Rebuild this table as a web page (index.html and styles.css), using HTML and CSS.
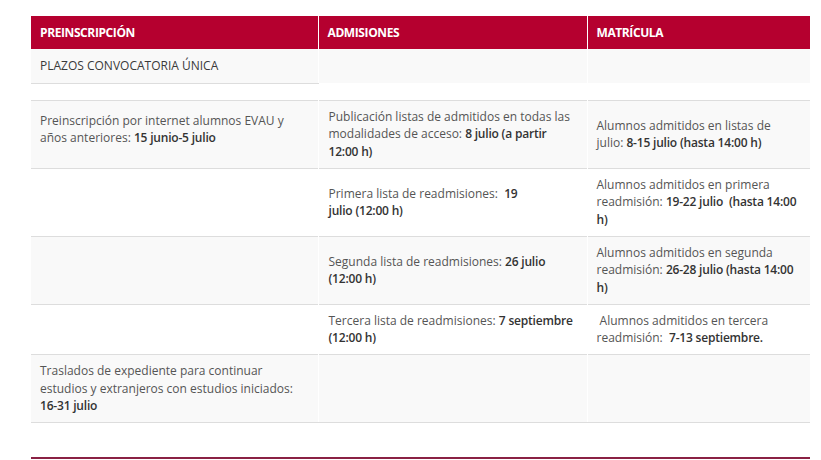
FILE: index.html
```html
<!DOCTYPE html>
<html lang="es">
<head>
<meta charset="utf-8">
<title>Plazos</title>
<link rel="stylesheet" href="styles.css">
</head>
<body>
<div class="page">
  <table class="plazos">
    <colgroup>
      <col class="c1"><col class="c2"><col class="c3">
    </colgroup>
    <thead>
      <tr>
        <th>Preinscripción</th>
        <th>Admisiones</th>
        <th>Matrícula</th>
      </tr>
    </thead>
    <tbody>
      <tr class="odd r-title">
        <td class="title">PLAZOS CONVOCATORIA ÚNICA</td>
        <td></td>
        <td></td>
      </tr>
      <tr class="even r-gap">
        <td></td>
        <td></td>
        <td></td>
      </tr>
      <tr class="odd r-line">
        <td class="top-p">Preinscripción por internet alumnos EVAU y años anteriores: <b>15 junio-5 julio</b></td>
        <td>Publicación listas de admitidos en todas las modalidades de acceso: <b>8 julio (a partir 12:00 h)</b></td>
        <td>Alumnos admitidos en listas de<br>julio: <b>8-15 julio (hasta 14:00 h)</b></td>
      </tr>
      <tr class="even r-line">
        <td></td>
        <td>Primera lista de readmisiones:&nbsp; <b>19<br>julio (12:00 h)</b></td>
        <td>Alumnos admitidos en primera readmisión: <b>19-22 julio&nbsp; (hasta 14:00 h)</b></td>
      </tr>
      <tr class="odd r-line">
        <td></td>
        <td>Segunda lista de readmisiones: <b>26 julio (12:00 h)</b></td>
        <td>Alumnos admitidos en segunda readmisión: <b>26-28 julio (hasta 14:00 h)</b></td>
      </tr>
      <tr class="even r-line">
        <td></td>
        <td>Tercera lista de readmisiones: <b>7 septiembre (12:00 h)</b></td>
        <td>&nbsp;Alumnos admitidos en tercera readmisión:&nbsp; <b>7-13 septiembre.</b></td>
      </tr>
      <tr class="odd r-line r-last">
        <td>Traslados de expediente para continuar estudios y extranjeros con estudios iniciados: <b>16-31 julio</b></td>
        <td></td>
        <td></td>
      </tr>
    </tbody>
  </table>
  <div class="rule"></div>
</div>
</body>
</html>
```
FILE: styles.css
```css
html, body {
  margin: 0;
  padding: 0;
  background: #fff;
}
body {
  font-family: "Open Sans", "Noto Sans", sans-serif;
  font-size: 12px;
  color: #555;
}
.page {
  padding: 16px 11px 0 31px;
}
.plazos {
  width: 779px;
  table-layout: fixed;
  border-collapse: collapse;
  border-spacing: 0;
}
.c1 { width: 287px; }
.c2 { width: 269px; }
.c3 { width: 223px; }

.plazos th {
  background: #b5002f;
  color: #fff;
  font-weight: 700;
  font-size: 12px;
  letter-spacing: -0.4px;
  text-transform: uppercase;
  text-align: left;
  height: 33px;
  padding: 0 9px;
  box-sizing: border-box;
  vertical-align: middle;
}
.plazos th + th {
  border-left: 1px solid #fff;
}
.plazos td {
  padding: 7.25px 9px;
  line-height: 17.5px;
  vertical-align: middle;
}
.plazos td + td {
  border-left: 1px solid #fff;
  padding-left: 10px;
}
.plazos td:last-child {
  padding-left: 9px;
  padding-right: 3px;
}
.plazos td b {
  font-weight: 600;
  color: #333;
  letter-spacing: -0.2px;
}
.odd td { background: #f9f9f9; }
.even td { background: #fff; }

.r-title td {
  height: 34px;
  padding-top: 0;
  padding-bottom: 0;
  box-sizing: border-box;
}
.plazos td.title {
  color: #3a3a3a;
  border-bottom: 1px solid #ddd;
}
.r-gap td {
  height: 17px;
  padding: 0;
  box-sizing: border-box;
}
.r-line td {
  border-top: 1px solid #ddd;
}
.r-last td {
  border-bottom: 1px solid #ddd;
}
.plazos td.top-p {
  padding-bottom: 17px;
}
.rule {
  width: 779px;
  height: 2px;
  margin-top: 34px;
  background: #8a2144;
}
```
